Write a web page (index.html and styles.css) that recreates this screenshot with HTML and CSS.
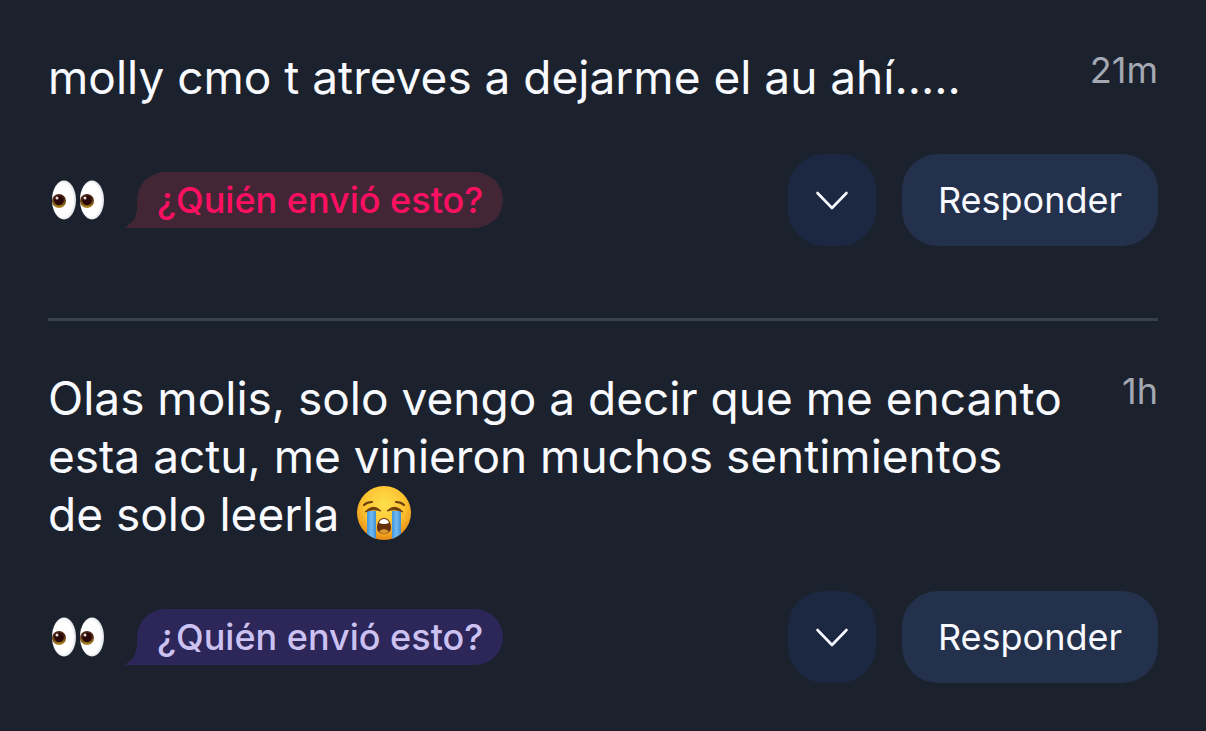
FILE: index.html
```html
<!DOCTYPE html>
<html lang="es">
  <head>
    <meta charset="UTF-8" />
    <meta name="viewport" content="width=device-width, initial-scale=1.0" />
    <title>Mensajes</title>
    <link rel="stylesheet" href="styles.css">
  </head>
  <body>
    <!-- shared icons -->
    <svg class="defs" width="0" height="0" aria-hidden="true">
      <defs>
        <radialGradient id="white" cx="0.45" cy="0.5" r="0.6">
          <stop offset="0.7" stop-color="#ffffff" />
          <stop offset="1" stop-color="#c9ccd6" />
        </radialGradient>
        <linearGradient id="iris" x1="0" y1="0" x2="0" y2="1">
          <stop offset="0.3" stop-color="#4a2412" />
          <stop offset="1" stop-color="#b08a1e" />
        </linearGradient>
        <radialGradient id="face" cx="0.5" cy="0.35" r="0.65">
          <stop offset="0" stop-color="#ffe04f" />
          <stop offset="0.6" stop-color="#fcc231" />
          <stop offset="1" stop-color="#e78a14" />
        </radialGradient>
        <linearGradient id="tear" x1="0" y1="0" x2="1" y2="0">
          <stop offset="0" stop-color="#4196dc" />
          <stop offset="0.5" stop-color="#6fb8f0" />
          <stop offset="1" stop-color="#3f8fd6" />
        </linearGradient>
        <clipPath id="round"><circle cx="28" cy="28" r="27" /></clipPath>
        <symbol id="eyes" viewBox="0 0 54 42">
          <ellipse cx="13" cy="21" rx="12" ry="19.5" fill="url(#white)" />
          <ellipse cx="41" cy="21" rx="12" ry="19.5" fill="url(#white)" />
          <circle cx="8" cy="22" r="7" fill="url(#iris)" />
          <circle cx="36" cy="22" r="7" fill="url(#iris)" />
          <circle cx="8" cy="21.5" r="4.8" fill="#2a0808" />
          <circle cx="36" cy="21.5" r="4.8" fill="#2a0808" />
          <circle cx="6" cy="19" r="1.5" fill="#e6dcd8" />
          <circle cx="34" cy="19" r="1.5" fill="#e6dcd8" />
        </symbol>
        <symbol id="cry" viewBox="0 0 56 56">
          <circle cx="28" cy="28" r="27" fill="url(#face)" />
          <g clip-path="url(#round)">
            <path d="M11 26h9v30h-9z" fill="url(#tear)" />
            <path d="M36 26h9v30h-9z" fill="url(#tear)" />
          </g>
          <g fill="none" stroke="#6e3d0c" stroke-width="2.2" stroke-linecap="round">
            <path d="M8 20Q11 17 16 17" />
            <path d="M48 20Q45 17 40 17" />
          </g>
          <path d="M9 27Q17 18 25 26Q17 23 9 27z" fill="#6e3d0c" stroke="#6e3d0c" stroke-linejoin="round" />
          <path d="M47 27Q39 18 31 26Q39 23 47 27z" fill="#6e3d0c" stroke="#6e3d0c" stroke-linejoin="round" />
          <path d="M28 33c4.5 0 7 4.5 7 9.5 0 4-2.5 6-7 6s-7-2-7-6C21 37.5 23.5 33 28 33z" fill="#65300c" />
          <path d="M23 38c1-3 2.5-4 5-4s4 1 5 4q-5 2-10 0z" fill="#fff" />
          <path d="M23 46.5q5-5 10 0-2 2-5 2t-5-2z" fill="#d99532" />
        </symbol>
        <symbol id="chevron" viewBox="0 0 34 20">
          <path d="M2.5 3L17 18 31.5 3" fill="none" stroke="currentColor" stroke-width="2.6" stroke-linecap="round" stroke-linejoin="round" />
        </symbol>
      </defs>
    </svg>

    <main class="feed">
      <article class="post">
        <div class="message">
          <p class="text">molly cmo t atreves a dejarme el au ahí.....</p>
          <time class="time">21m</time>
        </div>
        <div class="actions">
          <svg class="eyes" role="img" aria-label="ojos"><use href="#eyes" /></svg>
          <a href="#" class="who pink">¿Quién envió esto?</a>
          <button class="more" aria-label="Más opciones">
            <svg class="chevron"><use href="#chevron" /></svg>
          </button>
          <button class="reply">Responder</button>
        </div>
      </article>

      <article class="post">
        <div class="message">
          <p class="text">
            Olas molis, solo vengo a decir que me encanto esta actu, me vinieron
            muchos sentimientos de solo leerla
            <svg class="cry" role="img" aria-label="llorando"><use href="#cry" /></svg>
          </p>
          <time class="time">1h</time>
        </div>
        <div class="actions">
          <svg class="eyes" role="img" aria-label="ojos"><use href="#eyes" /></svg>
          <a href="#" class="who purple">¿Quién envió esto?</a>
          <button class="more" aria-label="Más opciones">
            <svg class="chevron"><use href="#chevron" /></svg>
          </button>
          <button class="reply">Responder</button>
        </div>
      </article>
    </main>
  </body>
</html>
```

FILE: styles.css
```css
* {
  box-sizing: border-box;
}
body {
  margin: 0;
  background-color: #1b222d;
  color: #f8faff;
  font-family: Inter, "Liberation Sans", sans-serif;
}
.defs {
  position: absolute;
}
.feed {
  padding: 0 48px;
}
.post {
  padding: 48px 0 72px;
}
.post + .post {
  border-top: 3px solid #38404e;
}
.message {
  display: flex;
  justify-content: space-between;
  gap: 56px;
  margin-bottom: 48px;
}
.text {
  margin: 0;
  font-size: 46px;
  line-height: 58px;
}
.time {
  font-size: 36px;
  line-height: 44px;
  color: #a3a8b2;
}
.cry {
  width: 56px;
  height: 56px;
  margin-left: 4px;
  vertical-align: -10px;
}
.actions {
  display: flex;
  align-items: center;
}
.eyes {
  width: 54px;
  height: 42px;
  margin: 0 32px 0 3px;
}
.who {
  position: relative;
  padding: 0 20px;
  border-radius: 28px;
  border-bottom-left-radius: 0;
  font-size: 36px;
  font-weight: 500;
  line-height: 56px;
  text-decoration: none;
}
/* speech bubble tail */
.who::before {
  content: "";
  position: absolute;
  left: -12px;
  bottom: 0;
  width: 12px;
  height: 18px;
  background-color: inherit;
  clip-path: polygon(100% 0, 100% 100%, 0 100%, 80% 50%);
}
.pink {
  background-color: #422636;
  color: #ff0f62;
}
.purple {
  background-color: #2c2659;
  color: #ccc2f2;
}
button {
  height: 92px;
  border: none;
  border-radius: 36px;
  color: inherit;
  font-family: inherit;
  font-size: 36px;
  cursor: pointer;
}
.more {
  display: flex;
  align-items: center;
  justify-content: center;
  width: 88px;
  padding: 0;
  margin: 0 26px 0 auto;
  background-color: #1c2841;
}
.chevron {
  width: 34px;
  height: 20px;
}
.reply {
  padding: 0 36px;
  background-color: #24314c;
}
```
